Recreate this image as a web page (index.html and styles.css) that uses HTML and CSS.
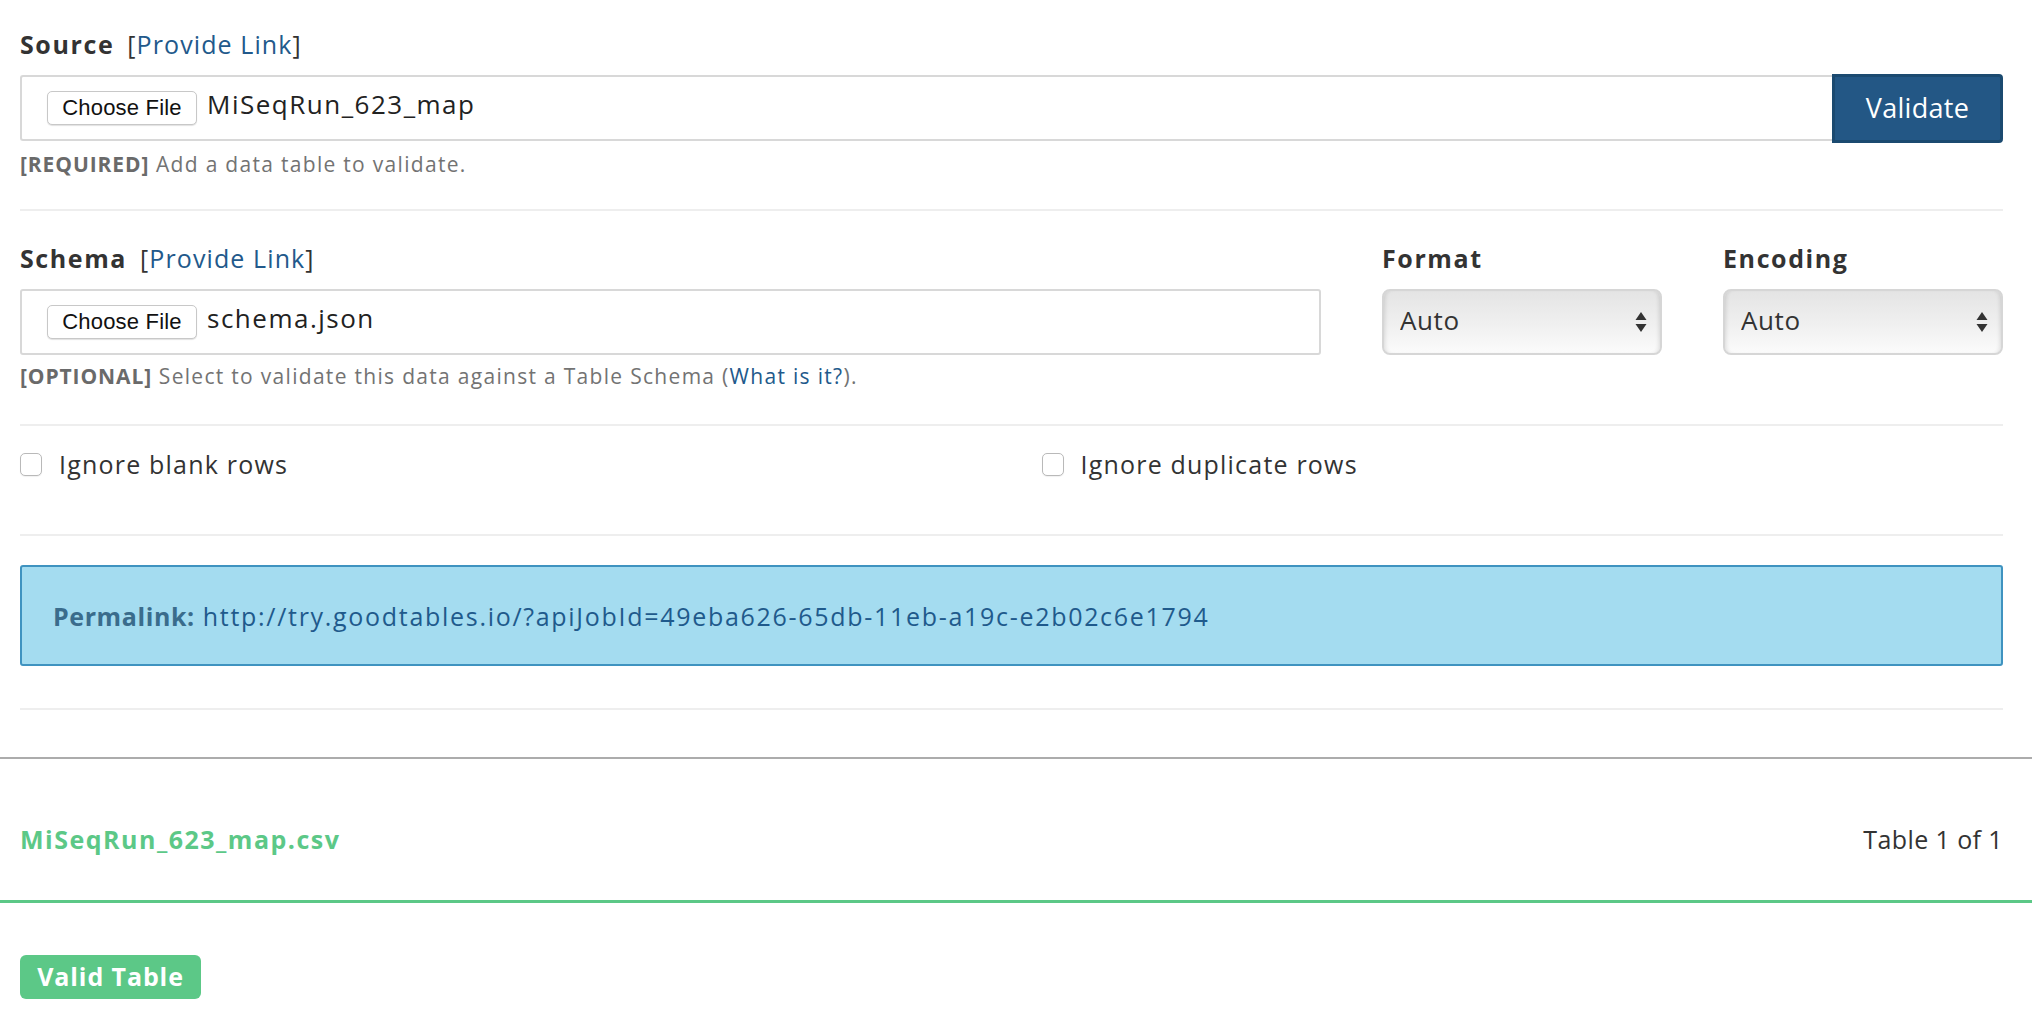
FILE: index.html
```html
<!DOCTYPE html>
<html lang="en">
<head>
<meta charset="utf-8">
<title>goodtables</title>
<link rel="stylesheet" href="styles.css">
</head>
<body>
<main class="page">
  <form class="form">
    <div class="field">
      <div class="label-row"><label class="label">Source</label><span class="bracket">[<a href="#" class="link">Provide Link</a>]</span></div>
      <div class="input-group">
        <div class="file-input">
          <button type="button" class="choose">Choose File</button>
          <span class="file-name">MiSeqRun_623_map</span>
        </div>
        <button type="button" class="validate">Validate</button>
      </div>
      <p class="help"><strong>[REQUIRED]</strong> Add a data table to validate.</p>
    </div>
    <hr class="sep">
    <div class="row3">
      <div class="field">
        <div class="label-row"><label class="label">Schema</label><span class="bracket">[<a href="#" class="link">Provide Link</a>]</span></div>
        <div class="file-input">
          <button type="button" class="choose">Choose File</button>
          <span class="file-name">schema.json</span>
        </div>
        <p class="help"><strong>[OPTIONAL]</strong> Select to validate this data against a Table Schema (<a href="#" class="link">What is it?</a>).</p>
      </div>
      <div class="field">
        <div class="label-row"><label class="label">Format</label></div>
        <div class="select-wrap">
          <select class="select"><option>Auto</option></select>
          <svg class="arrows" width="12" height="22" viewBox="0 0 12 22"><path d="M6 1 L11.5 9 H0.5 Z M6 21 L11.5 13 H0.5 Z" fill="#333"/></svg>
        </div>
      </div>
      <div class="field">
        <div class="label-row"><label class="label">Encoding</label></div>
        <div class="select-wrap">
          <select class="select"><option>Auto</option></select>
          <svg class="arrows" width="12" height="22" viewBox="0 0 12 22"><path d="M6 1 L11.5 9 H0.5 Z M6 21 L11.5 13 H0.5 Z" fill="#333"/></svg>
        </div>
      </div>
    </div>
    <hr class="sep sep-mid">
    <div class="row2">
      <label class="check"><input type="checkbox" class="box"><span>Ignore blank rows</span></label>
      <label class="check"><input type="checkbox" class="box"><span>Ignore duplicate rows</span></label>
    </div>
    <hr class="sep sep-low">
    <div class="alert"><strong class="alert-key">Permalink:</strong> <a href="#" class="alert-link">http://try.goodtables.io/?apiJobId=49eba626-65db-11eb-a19c-e2b02c6e1794</a></div>
    <hr class="sep sep-last">
  </form>
  <section class="report">
    <div class="report-head">
      <h2 class="table-name">MiSeqRun_623_map.csv</h2>
      <span class="table-count">Table 1 of 1</span>
    </div>
    <div class="report-body">
      <span class="badge">Valid Table</span>
    </div>
  </section>
</main>
</body>
</html>
```

FILE: styles.css
```css
* { box-sizing: border-box; }
html, body { margin: 0; padding: 0; background: #fff; }
body {
  font-family: "Open Sans", Lato, sans-serif;
  font-size: 25px;
  letter-spacing: 1.2px;
  color: #333;
}
.form { padding: 28px 29px 0 20px; }
.label-row { display: flex; align-items: baseline; height: 32px; line-height: 32px; white-space: nowrap; }
.label { font-weight: 700; font-size: 25px; letter-spacing: 1.6px; color: #333; margin-right: 13px; }
.bracket { color: #333; font-size: 25px; letter-spacing: 1.1px; }
.link { color: #22598b; text-decoration: none; }
.input-group { display: flex; margin-top: 15px; }
.file-input {
  flex: 1;
  display: flex;
  align-items: center;
  height: 66px;
  border: 2px solid #d8d8d8;
  border-radius: 3px;
  padding-left: 25px;
  margin-top: 15px;
}
.input-group .file-input { margin-top: 0; border-right: none; border-radius: 3px 0 0 3px; }
.choose {
  font-family: "Liberation Sans", Arial, sans-serif;
  font-size: 22px;
  letter-spacing: 0.2px;
  color: #111;
  background: #fff;
  border: 1px solid #c8c8c8;
  border-radius: 5px;
  height: 34px;
  width: 150px;
  padding: 0;
  box-shadow: 0 1px 1px rgba(0,0,0,0.12);
  margin-right: 10px;
}
.file-name { font-size: 26px; color: #222; line-height: 32px; margin-top: -8px; letter-spacing: 1.5px; }
.validate {
  width: 171px;
  height: 69px;
  margin-top: -1px;
  background: #235785;
  color: #fff;
  border: 3px solid #1b4a70;
  border-radius: 0 4px 4px 0;
  font-family: "Open Sans", sans-serif;
  font-size: 27px;
  letter-spacing: 0.3px;
  padding: 0 0 3px;
}
.help { margin: 7px 0 0; font-size: 21px; letter-spacing: 1.3px; line-height: 28px; color: #737373; }
.help strong { color: #6a6a6a; font-weight: 700; letter-spacing: 0.9px; }
.sep { border: 0; border-top: 2px solid #eeeeee; margin: 31px 0 31px; }
.sep-mid { margin-top: 34px; }
.row3 { display: grid; grid-template-columns: minmax(0, 1fr) 280px 280px; column-gap: 61px; }
.row3 .file-input { height: 66px; }
.select-wrap { position: relative; margin-top: 15px; }
.select {
  appearance: none;
  -webkit-appearance: none;
  width: 100%;
  height: 66px;
  border: 2px solid #d6d6d6;
  border-radius: 8px;
  background: linear-gradient(#e4e4e4, #f0f0f0 55%, #fbfbfb);
  box-shadow: inset 4px 0 4px -3px rgba(0,0,0,0.12), inset -4px 0 4px -3px rgba(0,0,0,0.12);
  font-family: "Open Sans", sans-serif;
  font-size: 26px;
  letter-spacing: 0.6px;
  color: #333;
  padding: 0 0 4px 16px;
}
.arrows { position: absolute; right: 15px; top: 22px; pointer-events: none; }
.row2 { display: grid; grid-template-columns: 1fr 1fr; column-gap: 60px; margin-top: -9px; }
.check { display: flex; align-items: center; height: 32px; font-size: 25px; color: #333; }
.box {
  appearance: none;
  -webkit-appearance: none;
  width: 22px;
  height: 23px;
  margin: 0 17px 0 0;
  border: 1px solid #b9b9b9;
  border-radius: 5px;
  background: #fff;
  box-shadow: 0 1px 1px rgba(0,0,0,0.06);
}
.sep-low { margin-top: 54px; margin-bottom: 29px; }
.alert {
  height: 101px;
  background: #a4dcf0;
  border: 2px solid #3f93c0;
  border-radius: 3px;
  padding: 0 31px;
  display: flex;
  align-items: center;
  font-size: 25px;
  white-space: nowrap;
}
.alert-key { color: #3a6c8c; font-weight: 700; letter-spacing: 0.6px; margin-right: 8px; }
.alert-link { color: #1f5a8c; text-decoration: none; letter-spacing: 1.7px; }
.sep-last { margin-top: 42px; margin-bottom: 47px; }
.report-head {
  display: flex;
  justify-content: space-between;
  align-items: center;
  border-top: 2px solid #acacac;
  border-bottom: 3px solid #5cc887;
  padding: 64px 29px 45px 20px;
}
.table-name { margin: 0; font-size: 25px; line-height: 32px; font-weight: 700; letter-spacing: 1.5px; color: #5cc887; }
.table-count { font-size: 25px; line-height: 32px; color: #333; letter-spacing: 0.4px; }
.report-body { padding: 52px 20px 0; }
.badge {
  display: inline-flex;
  align-items: center;
  justify-content: center;
  width: 181px;
  height: 44px;
  background: #5cc887;
  color: #fff;
  font-weight: 700;
  font-size: 25px;
  letter-spacing: 0.9px;
  border-radius: 6px;
  padding-bottom: 2px;
}
```
